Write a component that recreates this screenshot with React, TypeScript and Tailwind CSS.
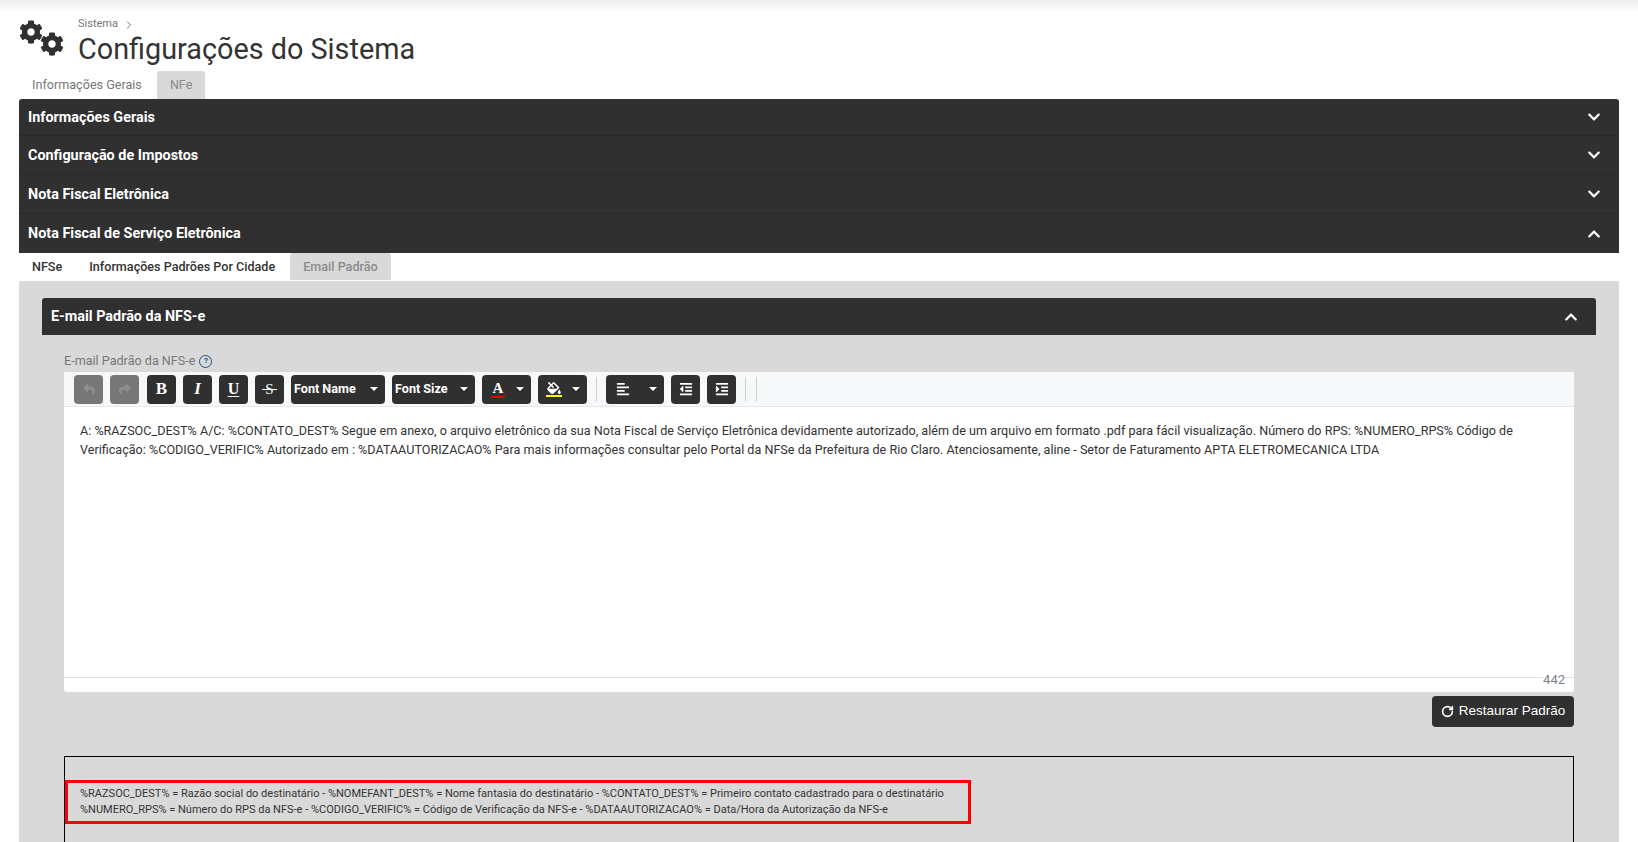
import { ChevronRight, RotateCw } from "lucide-react";
import type { ReactNode } from "react";
import {
  FaAlignLeft,
  FaChevronDown,
  FaChevronUp,
  FaCog,
  FaFillDrip,
  FaIndent,
  FaOutdent,
  FaReply,
  FaShare,
} from "react-icons/fa";

const sections = ["Informações Gerais", "Configuração de Impostos", "Nota Fiscal Eletrônica"];

function Caret() {
  return <span className="h-0 w-0 border-x-[4px] border-t-[4px] border-x-transparent border-t-white" />;
}

function ToolButton({ children, muted }: { children: ReactNode; muted?: boolean }) {
  return (
    <button
      className={`flex h-[29px] w-[29px] items-center justify-center rounded-[4px] text-[15px] ${
        muted ? "bg-[#777777] text-[#8f8f8f]" : "bg-[#303030] text-white"
      }`}
    >
      {children}
    </button>
  );
}

function ToolDropdown({ children, width }: { children: ReactNode; width: string }) {
  return (
    <button className={`flex h-[29px] items-center justify-between rounded-[4px] bg-[#303030] pl-[3px] pr-[7px] text-[12.6px] font-bold text-white ${width}`}>
      {children}
      <Caret />
    </button>
  );
}

export default function App() {
  return (
    <div className="relative h-[842px] overflow-hidden bg-white font-['Roboto',sans-serif] text-[#333333]">
      <div className="h-3 bg-gradient-to-b from-[#ececec] to-white" />

      {/* Title */}
      <div className="flex h-[59px] pl-[19px]">
        <div className="mt-[8px] flex w-[59px] text-[#303030]">
          <FaCog className="h-[24px] w-[24px]" />
          <FaCog className="-ml-[3px] mt-[12px] h-[24px] w-[24px]" />
        </div>
        <div className="pt-[4px]">
          <div className="flex h-[17px] items-center gap-[5px] text-[11px] text-[#777777]">
            Sistema <ChevronRight size={12} />
          </div>
          <h1 className="text-[28.8px] leading-[32px] text-[#333333]">Configurações do Sistema</h1>
        </div>
      </div>

      {/* Top tabs */}
      <div className="flex h-[28px] pl-[19px] text-[12.6px] text-[#777777]">
        <div className="flex items-center px-[13px] pt-[1px]">Informações Gerais</div>
        <div className="ml-[2px] flex items-center rounded-t-[3px] bg-[#d9d9d9] px-[13px] pt-[1px] text-[#8a8a8a]">NFe</div>
      </div>

      <div className="mx-[19px]">
        {/* Accordion headers */}
        <div className="rounded-t-[3px] bg-[#303030] text-[14.4px] font-bold text-white">
          {sections.map((title, i) => (
            <div
              key={title}
              className={`flex items-center justify-between border-b border-[#282828] pl-[9px] pr-[18px] ${i === 0 ? "h-[37px]" : "h-[39px]"}`}
            >
              <span className="pt-[2px]">{title}</span>
              <FaChevronDown size={14} />
            </div>
          ))}
          <div className="flex h-[39px] items-center justify-between pl-[9px] pr-[18px]">
            Nota Fiscal de Serviço Eletrônica
            <FaChevronUp size={14} />
          </div>
        </div>

        {/* Inner tabs */}
        <div className="flex h-[27px] text-[12.6px] font-medium text-[#333333]">
          <div className="flex items-center px-[13px] pt-[2px]">NFSe</div>
          <div className="ml-[1px] flex items-center px-[13px] pt-[2px]">Informações Padrões Por Cidade</div>
          <div className="ml-[2px] flex items-center rounded-t-[3px] bg-[#d9d9d9] px-[13px] pt-[2px] text-[#8a8a8a]">Email Padrão</div>
        </div>

        {/* Gray panel */}
        <div className="mt-[1px] h-[600px] bg-[#d9d9d9] px-[23px] pt-[17px]">
          <div className="flex h-[37px] items-center justify-between rounded-t-[3px] bg-[#303030] pl-[9px] pr-[18px] text-[14.4px] font-bold text-white">
            E-mail Padrão da NFS-e
            <FaChevronUp size={14} />
          </div>

          <div className="pl-[22px] pr-[22px]">
            <div className="mt-[16px] flex h-[21px] items-center gap-[4px] pb-[1px] text-[12.6px] text-[#777777]">
              E-mail Padrão da NFS-e
              <span className="flex h-[13px] w-[13px] items-center justify-center rounded-full border border-[#1f4f82] text-[8px] font-bold text-[#1f4f82]">?</span>
            </div>

            {/* Editor */}
            <div className="rounded-b-[3px] bg-white">
              <div className="flex h-[35px] items-center gap-[7px] border-b border-[#e4e7ec] bg-[#f7f8fa] pl-[10px] font-['Liberation_Serif',serif]">
                <ToolButton muted><FaReply size={12} /></ToolButton>
                <ToolButton muted><FaShare size={12} /></ToolButton>
                <span className="ml-[1px]"><ToolButton><span className="text-[17px] font-bold">B</span></ToolButton></span>
                <ToolButton><span className="text-[17px] font-bold italic">I</span></ToolButton>
                <ToolButton><span className="text-[16px] font-bold underline underline-offset-2">U</span></ToolButton>
                <ToolButton>
                  <span className="relative text-[15px] leading-[15px]">
                    S
                    <span className="absolute left-[-3px] right-[-3px] top-[7px] h-[1px] bg-white" />
                  </span>
                </ToolButton>
                <span className="font-['Roboto',sans-serif]"><ToolDropdown width="w-[94px]">Font Name</ToolDropdown></span>
                <span className="font-['Roboto',sans-serif]"><ToolDropdown width="w-[83px]">Font Size</ToolDropdown></span>
                <button className="flex h-[29px] w-[49px] items-center justify-between rounded-[4px] bg-[#303030] pl-[9px] pr-[7px] text-white">
                  <span className="flex flex-col items-center">
                    <span className="text-[15px] font-bold leading-[14px]">A</span>
                    <span className="mt-[1px] h-[2px] w-[14px] bg-[#e00000]" />
                  </span>
                  <Caret />
                </button>
                <button className="flex h-[29px] w-[49px] items-center justify-between rounded-[4px] bg-[#303030] pl-[8px] pr-[7px] text-white">
                  <span className="flex flex-col items-center">
                    <FaFillDrip className="h-[12px] w-[14px]" />
                    <span className="mt-[1px] h-[2px] w-[16px] bg-[#f7f700]" />
                  </span>
                  <Caret />
                </button>
                <span className="mx-[2px] h-[24px] w-px bg-[#d0d0d0]" />
                <button className="flex h-[29px] w-[58px] items-center justify-between rounded-[4px] bg-[#303030] pl-[10px] pr-[7px] text-[14px] text-white">
                  <FaAlignLeft />
                  <Caret />
                </button>
                <ToolButton><FaOutdent size={14} /></ToolButton>
                <ToolButton><FaIndent size={14} /></ToolButton>
                <span className="ml-[2px] h-[24px] w-px bg-[#d0d0d0]" />
                <span className="ml-[3px] h-[24px] w-px bg-[#d0d0d0]" />
              </div>

              <div className="h-[270px] pl-[16px] pr-[15px] pt-[14px] text-[12.6px] leading-[19px] text-[#333333]">
                A: %RAZSOC_DEST% A/C: %CONTATO_DEST% Segue em anexo, o arquivo eletrônico da sua Nota Fiscal de Serviço Eletrônica devidamente autorizado, além de um arquivo em formato .pdf para fácil visualização. Número do RPS: %NUMERO_RPS% Código de Verificação: %CODIGO_VERIFIC% Autorizado em : %DATAAUTORIZACAO% Para mais informações consultar pelo Portal da NFSe da Prefeitura de Rio Claro. Atenciosamente, aline - Setor de Faturamento APTA ELETROMECANICA LTDA
              </div>

              <div className="flex h-[15px] justify-end border-t border-[#e0e0e0] pr-[9px]">
                <span className="-mt-[6px] bg-white text-[13px] leading-[15px] text-[#7a7f8a]">442</span>
              </div>
            </div>

            <div className="mt-[4px] flex justify-end">
              <button className="flex h-[31px] w-[142px] items-center justify-center gap-[5px] rounded-[4px] bg-[#303030] font-['Liberation_Sans',sans-serif] text-[13.5px] text-white">
                <RotateCw size={13} strokeWidth={3} />
                Restaurar Padrão
              </button>
            </div>

            {/* Legend */}
            <div className="mt-[29px] h-[120px] border border-black pt-[23px]">
              <div className="w-[906px] border-[3px] border-[#ff0000] py-[3px] pl-[12px] text-[11px] leading-[16px] text-[#333333]">
                <div>%RAZSOC_DEST% = Razão social do destinatário - %NOMEFANT_DEST% = Nome fantasia do destinatário - %CONTATO_DEST% = Primeiro contato cadastrado para o destinatário</div>
                <div>%NUMERO_RPS% = Número do RPS da NFS-e - %CODIGO_VERIFIC% = Código de Verificação da NFS-e - %DATAAUTORIZACAO% = Data/Hora da Autorização da NFS-e</div>
              </div>
            </div>
          </div>
        </div>
      </div>
    </div>
  );
}
